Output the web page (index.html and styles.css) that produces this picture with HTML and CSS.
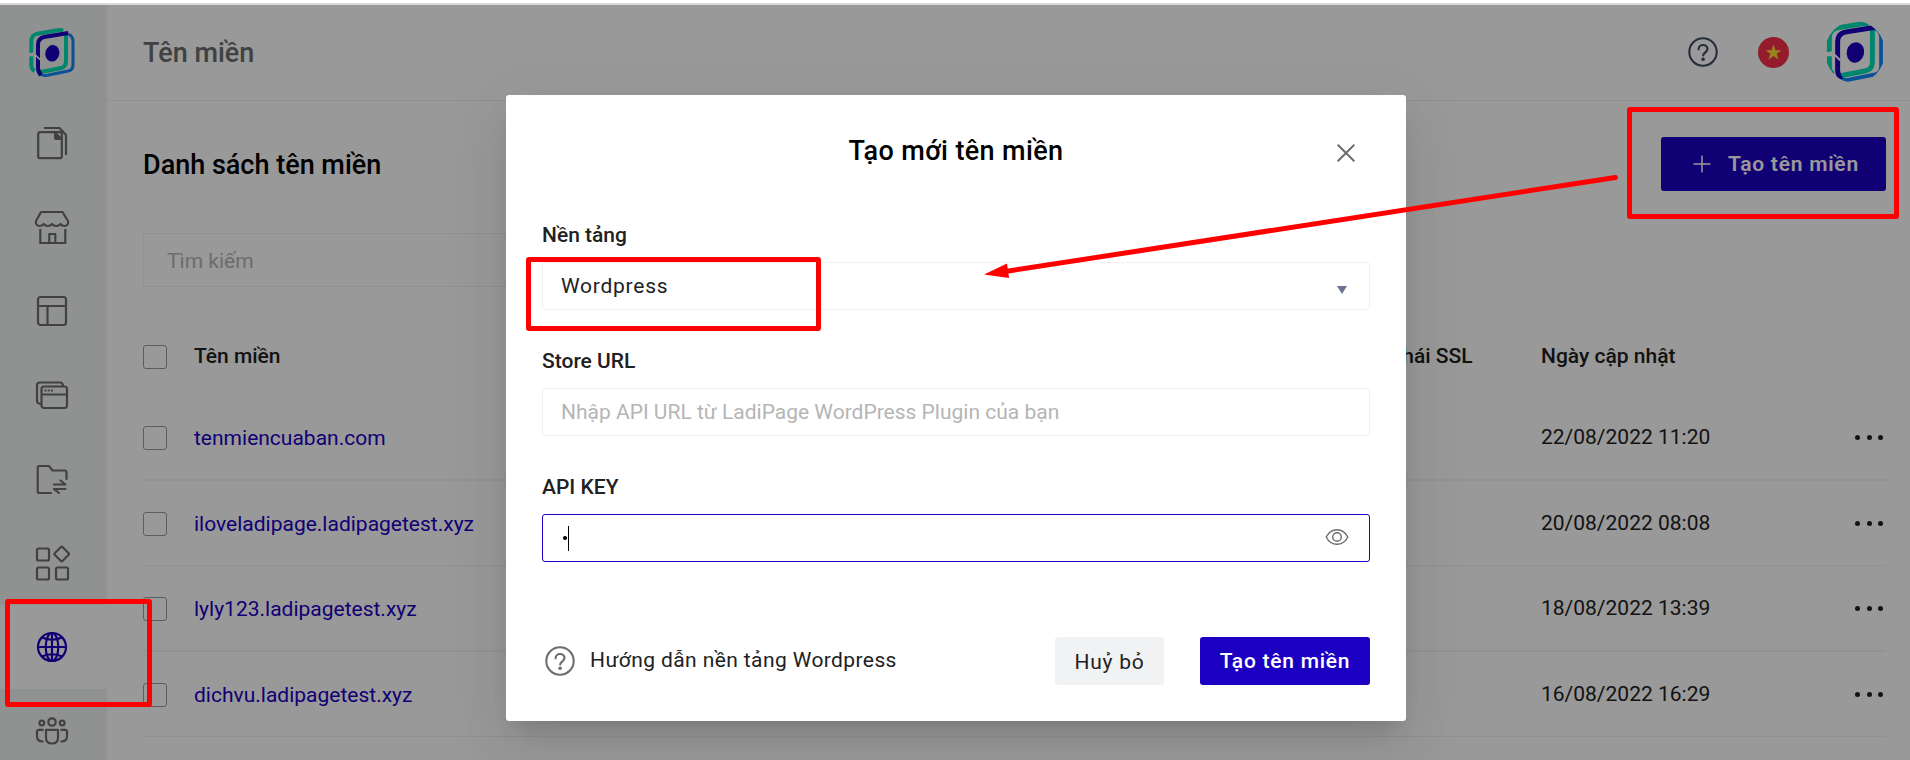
FILE: index.html
```html
<!DOCTYPE html>
<html lang="vi">
<head>
<meta charset="utf-8">
<title>Tên miền</title>
<link rel="stylesheet" href="styles.css">
</head>
<body>
<svg class="defs" width="0" height="0">
  <symbol id="logo" viewBox="84 84 144 150">
    <g fill="none" stroke-width="12">
      <path stroke="#00dfb4" d="M94 159V124Q94 105 112 101L172 91Q182 89 189 93"/>
      <path stroke="#00dfb4" d="M198 100V184Q198 202 180 205L118 217"/>
      <path stroke="#00dfb4" d="M94 169V197Q95 209 104 213"/>
      <path stroke="#0f88fb" stroke-width="9" d="M206 103Q219 108 219 125V194Q219 209 205 213L142 226Q129 228 121 223"/>
      <path stroke="#1c00c2" d="M114 178V134Q114 115 132 111L205 99"/>
      <path stroke="#1c00c2" d="M114 174V204Q115 218 123 225"/>
    </g>
    <path class="logo-notch" d="M86 168l14-9 20 20" fill="none" stroke-width="5"/>
    <ellipse cx="157" cy="160" rx="21" ry="25" fill="#1c00c2" transform="rotate(14 157 160)"/>
  </symbol>
  <symbol id="help" viewBox="0 0 30 30">
    <circle cx="15" cy="15" r="13.7" fill="none" stroke="currentColor" stroke-width="2.100"/>
    <path d="M10.600 12.300c0-2.600 1.900-4.300 4.400-4.300s4.500 1.700 4.500 4.100c0 3.100-4.300 3.300-4.300 6.300" fill="none" stroke="currentColor" stroke-width="2.200" stroke-linecap="round"/>
    <circle cx="15.100" cy="22.200" r="1.800" fill="currentColor"/>
  </symbol>
</svg>

<div class="app">
  <aside class="sidebar">
    <div class="brand"><svg width="48" height="50"><use href="#logo"/></svg></div>
    <nav class="nav">
      <a class="nav-item"><svg width="36" height="36" viewBox="0 0 36 36"><rect x="4.200" y="7.200" width="23.600" height="26" rx="2"/><path d="M10 3h15.500l6.500 7v20"/><path class="solid" d="M20 7h2l6 6v2h-6q-2 0-2-2z"/></svg></a>
      <a class="nav-item"><svg width="36" height="36" viewBox="0 0 36 36"><path d="M7 3h21.500l5.500 9c1 3-1 5-3.500 5-1.700 0-3-.7-4-2-1 1.300-2.500 2-4.200 2s-3.200-.7-4.200-2c-1 1.300-2.500 2-4.200 2s-3.200-.7-4.200-2c-1 1.300-2.400 2-4 2-2.600 0-4.700-2-3.700-5z"/><path d="M6.300 20v14h25V20M15.300 34v-9h6v9"/></svg></a>
      <a class="nav-item"><svg width="36" height="36" viewBox="0 0 36 36"><rect x="4" y="4" width="28" height="28" rx="2.500"/><path d="M4 13h28M13.500 13v19"/></svg></a>
      <a class="nav-item"><svg width="36" height="36" viewBox="0 0 36 36"><rect x="7.500" y="9.500" width="25.500" height="21.500" rx="2.500"/><path d="M7.500 17.500H33M7.500 27q-4.500 0-4.500-3V8.500q0-3 3-3h20q3 0 3 4"/><path d="M10.500 13.500h2M13.700 13.500h2M16.900 13.500h2"/></svg></a>
      <a class="nav-item"><svg width="36" height="36" viewBox="0 0 36 36"><path stroke-linecap="round" d="M17 32H5.500q-1.800 0-1.800-1.800V7q0-2 1.800-2H15l3.500 4.500h12q2 0 2 2V18M20 23.500h11.500l-5-4M31.500 28H20l5 4"/></svg></a>
      <a class="nav-item"><svg width="36" height="36" viewBox="0 0 36 36"><rect x="3" y="3.500" width="12" height="12" rx="1.500"/><rect x="3" y="22.500" width="12" height="12" rx="1.500"/><rect x="22" y="22.500" width="12" height="12" rx="1.500"/><rect x="22.200" y="3.500" width="11" height="11" rx="1.500" transform="rotate(45 27.700 9)"/></svg></a>
      <a class="nav-item active"><svg width="36" height="36" viewBox="0 0 36 36"><circle cx="18" cy="18" r="14"/><ellipse cx="18" cy="18" rx="6.300" ry="14"/><path d="M18 4v28M4 18h28M8 8.500q10 4.500 20 0M8 27.500q10-4.500 20 0"/></svg></a>
      <a class="nav-item"><svg width="36" height="36" viewBox="0 0 36 36"><circle cx="18" cy="9" r="3.700"/><circle cx="7.800" cy="10" r="2.400"/><circle cx="28.200" cy="10" r="2.400"/><path d="M12 16.800h12v8q0 5.700-6 5.700t-6-5.700zM9.500 16.800H5q-2 0-2 2V23q0 5.500 5.500 5.500h1M26.500 16.800H31q2 0 2 2V23q0 5.500-5.500 5.500h-1"/></svg></a>
    </nav>
  </aside>

  <main class="main">
    <header class="topbar">
      <h1 class="topbar-title">Tên miền</h1>
      <div class="topbar-tools">
        <svg class="topbar-help" width="30" height="30"><use href="#help"/></svg>
        <svg class="flag" width="31" height="31" viewBox="0 0 31 31"><circle cx="15.500" cy="15.500" r="15.500" fill="#f52e4a"/><path fill="#ffda2c" d="M15.500 7.500l2 5.700h6l-4.800 3.600 1.800 5.900-5-3.600-5 3.600 1.800-5.900-4.800-3.600h6z"/></svg>
        <div class="avatar"><svg width="60" height="62" viewBox="0 0 60 62"><use href="#logo" width="60" height="62"/></svg></div>
      </div>
    </header>

    <section class="content">
      <div class="content-head">
        <h2 class="content-title">Danh sách tên miền</h2>
        <button class="create"><svg width="18" height="18" viewBox="0 0 18 18"><path d="M9 .5v17M.5 9h17" stroke="#fff" stroke-width="1.500"/></svg><span>Tạo tên miền</span></button>
      </div>
      <div class="search">Tìm kiếm</div>

      <div class="table">
        <div class="row head"><i class="check"></i><span>Tên miền</span><span>Trạng thái SSL</span><span>Ngày cập nhật</span></div>
        <div class="row thick"><i class="check"></i><a class="domain">tenmiencuaban.com</a><span></span><span>22/08/2022 11:20</span><b class="more"><i></i><i></i><i></i></b></div>
        <div class="row"><i class="check"></i><a class="domain">iloveladipage.ladipagetest.xyz</a><span></span><span>20/08/2022 08:08</span><b class="more"><i></i><i></i><i></i></b></div>
        <div class="row thick"><i class="check"></i><a class="domain">lyly123.ladipagetest.xyz</a><span></span><span>18/08/2022 13:39</span><b class="more"><i></i><i></i><i></i></b></div>
        <div class="row"><i class="check"></i><a class="domain">dichvu.ladipagetest.xyz</a><span></span><span>16/08/2022 16:29</span><b class="more"><i></i><i></i><i></i></b></div>
      </div>
    </section>
  </main>
</div>

<div class="overlay">
  <div class="modal">
    <div class="modal-head">
      <h3 class="modal-title">Tạo mới tên miền</h3>
      <svg class="close" width="18" height="18" viewBox="0 0 18 18"><path d="M.7.7l16.600 16.600M17.300.7L.7 17.300" stroke="#6d6d6d" stroke-width="2"/></svg>
    </div>
    <div class="fields">
      <div class="field">
        <label class="label">Nền tảng</label>
        <div class="input select"><span class="select-value">Wordpress</span><i class="caret"></i></div>
      </div>
      <div class="field">
        <label class="label">Store URL</label>
        <div class="input"><span class="placeholder">Nhập API URL từ LadiPage WordPress Plugin của bạn</span></div>
      </div>
      <div class="field">
        <label class="label">API KEY</label>
        <div class="input focused">
          <span class="secret"><i class="dot"></i><i class="cursor"></i></span>
          <svg class="eye" width="24" height="18" viewBox="0 0 24 18" fill="none" stroke="#6d6d6d" stroke-width="1.400"><path d="M1.200 9C3.500 4.500 7.200 1.700 12 1.700S20.500 4.500 22.800 9C20.500 13.500 16.800 16.300 12 16.300S3.500 13.500 1.200 9z"/><circle cx="12" cy="9" r="4.300"/></svg>
        </div>
      </div>
    </div>
    <div class="modal-foot">
      <svg class="guide-icon" width="30" height="30"><use href="#help"/></svg>
      <span class="guide">Hướng dẫn nền tảng Wordpress</span>
      <button class="btn cancel">Huỷ bỏ</button>
      <button class="btn submit">Tạo tên miền</button>
    </div>
  </div>
</div>

<div class="mark mark-menu"></div>
<div class="mark mark-create"></div>
<div class="mark mark-platform"></div>
<svg class="arrow" width="1910" height="760" viewBox="0 0 1910 760"><path d="M1615.500 177.500Q1310 224 1007 271.200" fill="none" stroke="#f00" stroke-width="5" stroke-linecap="round"/><path d="M984 274.500L1007 263.500 1009 278z" fill="#f00"/></svg>
</body>
</html>
```

FILE: styles.css
```css
* { box-sizing: border-box; }
body {
  margin: 0;
  width: 1910px;
  height: 760px;
  overflow: hidden;
  padding-top: 3px;
  background: #fff;
  font-family: Roboto, "Liberation Sans", sans-serif;
  font-size: 21px;
  line-height: 24px;
  color: #212121;
}
h1, h2, h3 { margin: 0; font-size: 27px; line-height: 32px; font-weight: 500; }
button { border: 0; font: inherit; padding: 0; }
.defs { position: absolute; }

.app { display: flex; height: 757px; border-top: 2px solid #dadada; overflow: hidden; }

.sidebar { width: 107px; flex: none; background: #f0f4f2; }
.brand { height: 96px; padding-left: 28px; display: flex; align-items: center; --notch: #f0f4f2; }
.logo-notch { stroke: var(--notch, #fff); }
.nav { display: flex; flex-direction: column; }
.nav-item {
  height: 84px;
  padding-left: 34px;
  display: flex;
  align-items: center;
  color: #6d6d6d;
}
.nav-item svg { fill: none; stroke: currentColor; stroke-width: 2.200; stroke-linejoin: round; }
.nav-item .solid { fill: currentColor; stroke: none; }
.nav-item.active { background: #fff; color: #1c00c2; }

.main { flex: 1; }
.topbar {
  height: 96px;
  padding: 0 25px 0 36px;
  border-bottom: 1px solid #f1f1f1;
  display: flex;
  align-items: center;
  justify-content: space-between;
}
.topbar-title { color: #6d6d6d; }
.topbar-tools { display: flex; align-items: center; }
.topbar-help { color: #414b63; margin: 0 40px 1px 0; }
.flag { margin-right: 36px; }
.avatar { width: 60px; height: 62px; border-radius: 50%; overflow: hidden; margin-bottom: 1px; }
.avatar svg { display: block; }

.content { padding: 36px 24px 0 36px; }
.content-head { display: flex; align-items: center; justify-content: space-between; height: 54px; }
.content-title { color: #000; padding-top: 2px; }
.create {
  width: 225px;
  height: 54px;
  padding-left: 32px;
  display: flex;
  align-items: center;
  gap: 17px;
  border-radius: 3px;
  background: #1c00c2;
  color: #fff;
  font-weight: 600;
  letter-spacing: .75px;
}
.search {
  width: 480px;
  height: 54px;
  margin-top: 42px;
  padding: 0 23px;
  border: 1px solid #f1f1f1;
  border-radius: 3px;
  line-height: 54px;
  color: #b5b5b5;
}

.table { margin-top: 31px; }
.row {
  display: grid;
  grid-template-columns: 51px 1142px 205px 1fr 34px;
  align-items: center;
  height: 85px;
  border-bottom: 1px solid #f0f0f0;
}
.row.thick { height: 86px; border-bottom: 2px solid #f4f4f4; }
.row.head { height: 77px; border: 0; font-weight: 500; }
.row.head span { padding-bottom: 2px; }
.check { width: 24px; height: 24px; border: 1px solid #9b9b9b; border-radius: 3px; }
.row:not(.head) .check { margin-top: 2px; }
.domain { color: #1c00c2; padding-top: 1px; }
.more { display: flex; gap: 6.500px; justify-content: center; }
.more i { width: 5px; height: 5px; border-radius: 50%; background: #212121; }

.overlay {
  position: absolute;
  inset: 5px 0 0 0;
  padding: 90px 504px 0 506px;
  background: rgba(0, 0, 0, .4);
}
.modal {
  height: 626px;
  padding: 0 36px;
  border-radius: 3px;
  background: #fff;
  box-shadow: 0 16px 22px -10px rgba(0, 0, 0, .15), 0 36px 57px 4px rgba(0, 0, 0, .04), 0 13px 69px 12px rgba(0, 0, 0, .05);
}
.modal-head {
  display: grid;
  grid-template-columns: 33px 1fr 33px;
  height: 128px;
  padding-top: 40px;
}
.modal-title { grid-column: 2; text-align: center; color: #000; letter-spacing: .37px; }
.close { margin: 9px 0 0 0; }
.fields { display: grid; gap: 39px; }
.field { display: grid; gap: 15px; }
.label { height: 24px; font-weight: 500; }
.input {
  height: 48px;
  padding: 0 19px;
  border: 1px solid #f1f1f1;
  border-radius: 3px;
  display: flex;
  align-items: center;
  justify-content: space-between;
}
.input.focused { border-color: #1c00c2; }
.select-value { letter-spacing: .75px; }
.select-value, .placeholder { margin: -1px 0 0 -1px; }
.caret { margin: 8px 3px 0 0; border: 5px solid transparent; border-top: 8px solid #6b7390; border-bottom: 0; }
.placeholder { color: #b5b5b5; }
.secret { display: flex; align-items: center; gap: 1px; padding-left: 1px; }
.dot { width: 4px; height: 4px; border-radius: 50%; background: #000; }
.cursor { width: 1px; height: 25px; background: #000; }
.eye { margin: 0 1px 3px 0; }
.modal-foot { display: flex; align-items: center; margin-top: 75px; height: 48px; }
.guide-icon { margin-left: 3px; color: #6d6d6d; }
.guide { margin: -3px auto 0 15px; letter-spacing: .4px; }
.btn { height: 48px; border-radius: 3px; letter-spacing: .75px; }
.cancel { width: 109px; background: #f1f2f4; color: #212121; padding-top: 2px; }
.submit { width: 170px; margin-left: 36px; background: #1c00c2; color: #fff; font-weight: 500; }

.mark { position: absolute; border: 5px solid #f00; border-radius: 3px; }
.mark-menu { left: 5px; top: 599px; width: 147px; height: 108px; }
.mark-create { left: 1627px; top: 107px; width: 272px; height: 112px; }
.mark-platform { left: 526px; top: 257px; width: 295px; height: 74px; }
.arrow { position: absolute; left: 0; top: 0; }
```
